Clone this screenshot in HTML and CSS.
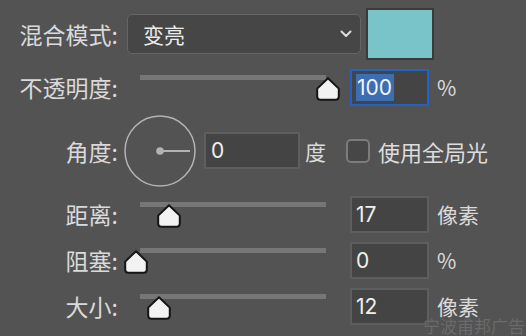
FILE: index.html
```html
<!DOCTYPE html>
<html lang="zh">
<head>
<meta charset="utf-8">
<link rel="stylesheet" href="styles.css">
</head>
<body>
<div class="panel">
  <div class="row row-blend">
    <span class="label">混合模式:</span>
    <div class="select">
      <span class="select-text">变亮</span>
      <svg class="chevron" width="12" height="8" viewBox="0 0 12 8"><path d="M1.5 1.5 L6 6 L10.5 1.5" fill="none" stroke="#dedede" stroke-width="2" stroke-linecap="round" stroke-linejoin="round"/></svg>
    </div>
    <div class="swatch"></div>
  </div>

  <div class="row">
    <span class="label">不透明度:</span>
    <div class="slider">
      <div class="track"></div>
      <svg class="thumb" style="left:198px" width="24" height="24" viewBox="0 0 24 24"><path d="M12 1.2 L22.8 11.6 L22.8 19.6 Q22.8 22.8 19.6 22.8 L4.4 22.8 Q1.2 22.8 1.2 19.6 L1.2 11.6 Z" fill="#f2f2f2" stroke="#151515" stroke-width="2" stroke-linejoin="round"/></svg>
    </div>
    <div class="field field-active"><span class="sel">100</span></div>
    <span class="unit">%</span>
  </div>

  <div class="row row-angle">
    <span class="label">角度:</span>
    <svg class="dial" width="72" height="72" viewBox="0 0 72 72">
      <circle cx="36" cy="36" r="35" fill="none" stroke="#b3b3b3" stroke-width="1.5"/>
      <circle cx="36" cy="36" r="3.8" fill="#b3b3b3"/>
      <line x1="36" y1="36" x2="66" y2="36" stroke="#b3b3b3" stroke-width="2"/>
    </svg>
    <div class="field field-angle">0</div>
    <span class="unit unit-deg">度</span>
    <span class="checkbox"></span>
    <span class="check-label">使用全局光</span>
  </div>

  <div class="row">
    <span class="label">距离:</span>
    <div class="slider">
      <div class="track"></div>
      <svg class="thumb" style="left:39px" width="24" height="24" viewBox="0 0 24 24"><path d="M12 1.2 L22.8 11.6 L22.8 19.6 Q22.8 22.8 19.6 22.8 L4.4 22.8 Q1.2 22.8 1.2 19.6 L1.2 11.6 Z" fill="#f2f2f2" stroke="#151515" stroke-width="2" stroke-linejoin="round"/></svg>
    </div>
    <div class="field">17</div>
    <span class="unit">像素</span>
  </div>

  <div class="row">
    <span class="label">阻塞:</span>
    <div class="slider">
      <div class="track"></div>
      <svg class="thumb" style="left:6px" width="24" height="24" viewBox="0 0 24 24"><path d="M12 1.2 L22.8 11.6 L22.8 19.6 Q22.8 22.8 19.6 22.8 L4.4 22.8 Q1.2 22.8 1.2 19.6 L1.2 11.6 Z" fill="#f2f2f2" stroke="#151515" stroke-width="2" stroke-linejoin="round"/></svg>
    </div>
    <div class="field">0</div>
    <span class="unit">%</span>
  </div>

  <div class="row">
    <span class="label">大小:</span>
    <div class="slider">
      <div class="track"></div>
      <svg class="thumb" style="left:29px" width="24" height="24" viewBox="0 0 24 24"><path d="M12 1.2 L22.8 11.6 L22.8 19.6 Q22.8 22.8 19.6 22.8 L4.4 22.8 Q1.2 22.8 1.2 19.6 L1.2 11.6 Z" fill="#f2f2f2" stroke="#151515" stroke-width="2" stroke-linejoin="round"/></svg>
    </div>
    <div class="field">12</div>
    <span class="unit">像素</span>
  </div>

  <span class="watermark">宁波甫邦广告</span>
</div>
</body>
</html>
```

FILE: styles.css
```css
* { box-sizing: border-box; }
html, body {
  margin: 0;
  padding: 0;
  background: #535353;
}
body {
  width: 526px;
  height: 336px;
  overflow: hidden;
  font-family: "Inter", "Noto Sans CJK SC", sans-serif;
  color: #dcdcdc;
}
.panel {
  position: relative;
  width: 526px;
  height: 336px;
  padding: 8px 0 0 18px;
  display: flex;
  flex-direction: column;
  gap: 9px;
}
.row {
  display: flex;
  align-items: center;
  height: 37px;
}
.row-blend { height: 52px; }
.row-angle { height: 72px; }
.label {
  width: 100px;
  text-align: right;
  font-size: 23px;
  line-height: 1;
  white-space: nowrap;
  font-family: "Noto Sans CJK SC", sans-serif;
  color: #dadada;
}
.select {
  margin-left: 9px;
  width: 234px;
  height: 40px;
  border: 1.5px solid #656565;
  border-radius: 5px;
  background: #464646;
  display: flex;
  align-items: center;
  justify-content: space-between;
  padding: 0 8px 0 15px;
}
.select-text {
  font-family: "Noto Sans CJK SC", sans-serif;
  font-size: 21px;
  color: #ececec;
  line-height: 1;
}
.chevron { display: block; }
.swatch {
  margin-left: 5px;
  width: 68px;
  height: 52px;
  border: 2.5px solid #3a3a3a;
  background: #79c4c9;
}
.slider {
  position: relative;
  width: 222px;
  height: 37px;
  align-self: flex-start;
}
.track {
  margin: 6px 0 0 22px;
  width: 186px;
  height: 5px;
  background: #777777;
}
.thumb {
  position: absolute;
  top: 8px;
  display: block;
}
.field {
  margin-left: 10px;
  width: 79px;
  height: 37px;
  border: 2px solid #5e5e5e;
  background: #444444;
  display: flex;
  align-items: center;
  padding-left: 4px;
  font-size: 21px;
  color: #f0f0f0;
  line-height: 1;
}
.field-active {
  border-color: #2262c8;
  padding-left: 4px;
}
.sel {
  background: #3c6eb4;
  color: #f4f4f4;
  padding: 3px 2px 3px 1px;
}
.unit {
  margin-left: 8px;
  font-size: 21px;
  line-height: 1;
  font-family: "Noto Sans CJK SC", sans-serif;
  color: #dadada;
}
.dial {
  margin-left: 6px;
  display: block;
}
.field-angle {
  margin-left: 8px;
  width: 96px;
  padding-left: 5px;
  margin-top: -2px;
}
.unit-deg { margin-left: 5px; }
.checkbox {
  margin-left: 20px;
  width: 24px;
  height: 24px;
  border: 2px solid #7c7c7c;
  border-radius: 5px;
  background: #474747;
}
.check-label {
  margin-left: 8px;
  font-family: "Noto Sans CJK SC", sans-serif;
  font-size: 22px;
  line-height: 1;
  color: #dcdcdc;
}
.watermark {
  position: absolute;
  left: 423px;
  top: 317px;
  font-family: "Noto Sans CJK SC", sans-serif;
  font-size: 17px;
  line-height: 1;
  color: #6a6a6a;
  white-space: nowrap;
}
```
